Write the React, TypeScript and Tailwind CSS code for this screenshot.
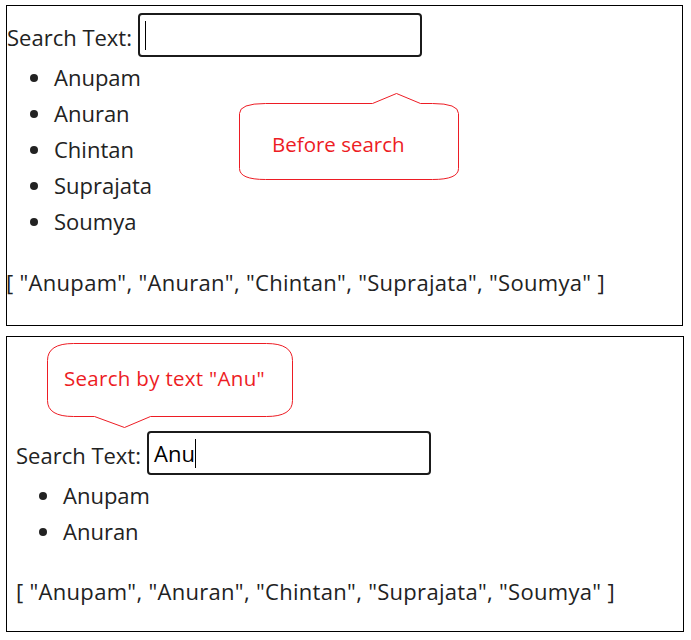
import React from 'react';

const names = ['Anupam', 'Anuran', 'Chintan', 'Suprajata', 'Soumya'];
const arrayText = '[ "Anupam", "Anuran", "Chintan", "Suprajata", "Soumya" ]';

// speech bubble with a small tip, drawn as svg
const Bubble: React.FC<{ d: string; w: number; h: number; className: string; children: React.ReactNode }> = ({
  d,
  w,
  h,
  className,
  children
}) => (
  <div className={`absolute ${className}`}>
    <svg width={w} height={h} viewBox={`0 0 ${w} ${h}`} className="absolute left-0 top-0">
      <path d={d} fill="white" stroke="#ed1c24" strokeWidth="1" />
    </svg>
    <div className="relative h-full">{children}</div>
  </div>
);

const SearchBox: React.FC<{ value: string }> = ({ value }) => (
  <div className="flex items-center h-[44px] w-[284px] border-2 border-[#1b1b1b] rounded-[4px] pl-[5px] text-[22px] text-black">
    <span>{value}</span>
    <span className="inline-block w-px h-[29px] bg-black" />
  </div>
);

const Panel: React.FC<{ items: string[]; value: string }> = ({ items, value }) => (
  <>
    <div className="flex items-center gap-[6px]">
      <span className="mt-[5px]">Search Text:</span>
      <SearchBox value={value} />
    </div>
    <ul className="list-disc pl-[46px] mt-[2px]">
      {items.map((n) => (
        <li key={n} className="h-[36px] leading-[36px] pl-[1px]">
          {n}
        </li>
      ))}
    </ul>
  </>
);

export default function App() {
  return (
    <div className="w-[691px] h-[640px] bg-white text-[#222] text-[22px] font-['Open_Sans',sans-serif] pt-[5px] pl-[6px]">
      {/* before search */}
      <div className="relative w-[677px] h-[321px] border border-black pt-[7px]">
        <Panel items={names} value="" />
        <p className="mt-[25px] leading-[36px] -ml-px tracking-[0.3px]">{arrayText}</p>
        <Bubble
          className="left-[232px] top-[87px] w-[221px] h-[88px]"
          w={221}
          h={88}
          d="M0.5 20.5 Q0.5 10.5 26.5 10.5 L133.5 10.5 L157.5 0.5 L181.5 10.5 L193.5 10.5 Q219.5 10.5 219.5 20.5 L219.5 75.5 Q219.5 86.5 193.5 86.5 L26.5 86.5 Q0.5 86.5 0.5 75.5 Z"
        >
          <div className="pt-[41px] pl-[33px] text-[20.5px] leading-none text-[#ed1c24]">Before search</div>
        </Bubble>
      </div>

      {/* after search */}
      <div className="relative w-[678px] h-[296px] border border-black mt-[10px] pt-[94px] pl-[9px]">
        <Panel items={names.filter((n) => n.startsWith('Anu'))} value="Anu" />
        <p className="mt-[24px] leading-[36px] tracking-[0.3px]">{arrayText}</p>
        <Bubble
          className="left-[40px] top-[6px] w-[248px] h-[86px]"
          w={248}
          h={86}
          d="M0.5 17.5 Q0.5 0.5 26.5 0.5 L219.5 0.5 Q245.5 0.5 245.5 17.5 L245.5 57.5 Q245.5 73.5 219.5 73.5 L103.5 73.5 L77.5 84.5 L47.5 73.5 L26.5 73.5 Q0.5 73.5 0.5 57.5 Z"
        >
          <div className="pt-[25px] pl-[17px] text-[20.5px] leading-none tracking-[0.3px] text-[#ed1c24]">Search by text "Anu"</div>
        </Bubble>
      </div>
    </div>
  );
}
